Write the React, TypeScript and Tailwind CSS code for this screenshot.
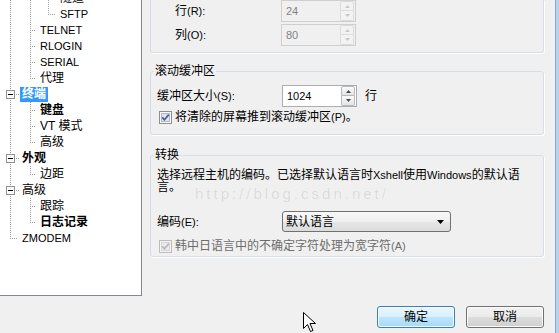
type G = 'v' | 'tee' | 'ell' | 'box';

type Row = { guides: G[]; label: string; latin?: boolean; bold?: boolean; selected?: boolean };

const treeRows: Row[] = [
  { guides: ['v', 'v', 'tee'], label: '隧道' },
  { guides: ['v', 'v', 'ell'], label: 'SFTP', latin: true },
  { guides: ['v', 'tee'], label: 'TELNET', latin: true },
  { guides: ['v', 'tee'], label: 'RLOGIN', latin: true },
  { guides: ['v', 'tee'], label: 'SERIAL', latin: true },
  { guides: ['v', 'ell'], label: '代理' },
  { guides: ['box'], label: '终端', bold: true, selected: true },
  { guides: ['v', 'tee'], label: '键盘', bold: true },
  { guides: ['v', 'tee'], label: 'VT 模式' },
  { guides: ['v', 'ell'], label: '高级' },
  { guides: ['box'], label: '外观', bold: true },
  { guides: ['v', 'ell'], label: '边距' },
  { guides: ['box'], label: '高级' },
  { guides: ['v', 'tee'], label: '跟踪' },
  { guides: ['v', 'ell'], label: '日志记录', bold: true },
  { guides: ['ell'], label: 'ZMODEM', latin: true },
];

const cellWidths = [20, 18, 20];
const dot = { stroke: '#a0a0a0', strokeDasharray: '1 1' };

function Guide({ kind, w }: { kind: G; w: number }) {
  const x = 10.5;
  return (
    <svg width={w} height={16} className="block shrink-0">
      {(kind === 'v' || kind === 'tee') && <line x1={x} y1={0} x2={x} y2={16} {...dot} />}
      {kind === 'ell' && <line x1={x} y1={0} x2={x} y2={9} {...dot} />}
      {(kind === 'tee' || kind === 'ell') && <line x1={10} y1={8.5} x2={w - 2} y2={8.5} {...dot} />}
      {kind === 'box' && (
        <>
          <line x1={x} y1={0} x2={x} y2={4} {...dot} />
          <line x1={x} y1={14} x2={x} y2={16} {...dot} />
          <rect x={6.5} y={4.5} width={8} height={8} fill="#fafafa" stroke="#919191" />
          <line x1={8} y1={8.5} x2={13} y2={8.5} stroke="#000" />
          <line x1={16} y1={8.5} x2={19} y2={8.5} {...dot} />
        </>
      )}
    </svg>
  );
}

function Tree() {
  return (
    <div className="h-[296px] w-[142px] shrink-0 overflow-hidden border-r border-b border-[#828790] bg-white">
      <div className="mt-[-10px] flex flex-col">
        {treeRows.map((r, i) => (
          <div key={i} className="flex h-4 items-center">
            {r.guides.map((g, j) => (
              <Guide key={j} kind={g} w={cellWidths[j]} />
            ))}
            <span
              className={`whitespace-nowrap px-[2px] leading-[15px] ${r.latin ? 'text-[11px]' : 'text-[12px]'} ${
                r.bold ? 'font-bold' : ''
              } ${r.selected ? 'bg-[#3399ff] text-white' : 'text-black'}`}
            >
              {r.label}
            </span>
          </div>
        ))}
      </div>
    </div>
  );
}

function Spin({ value, disabled = false }: { value: string; disabled?: boolean }) {
  const btn = disabled ? 'border-[#dcdcdc] bg-[#f3f3f3]' : 'border-[#b5b9c0] bg-[linear-gradient(#fbfbfb,#e4e4e4)]';
  const arrow = disabled ? '#c8c8c8' : '#4a4a4a';
  return (
    <div
      className={`flex h-[22px] w-[75px] shrink-0 items-center border ${
        disabled ? 'border-[#cfcfcf] bg-[#f0f0f0] text-[#838383]' : 'border-[#abadb3] bg-white text-black'
      }`}
    >
      <span className="flex-1 pl-[4px] text-[11px] leading-none">{value}</span>
      <div className="mr-[1px] flex h-[20px] w-[14px] flex-col">
        <div className={`flex h-[10px] items-center justify-center rounded-t-[2px] border ${btn}`}>
          <svg width="5" height="3" className="block">
            <path d="M2.5 0L5 3H0z" fill={arrow} />
          </svg>
        </div>
        <div className={`flex h-[10px] items-center justify-center rounded-b-[2px] border border-t-0 ${btn}`}>
          <svg width="5" height="3" className="block">
            <path d="M0 0h5L2.5 3z" fill={arrow} />
          </svg>
        </div>
      </div>
    </div>
  );
}

function Check({ disabled = false }: { disabled?: boolean }) {
  return (
    <svg width="13" height="13" className="block shrink-0">
      <rect x="0.5" y="0.5" width="12" height="12" fill={disabled ? '#f4f4f4' : '#f7f7f7'} stroke={disabled ? '#bcbcbc' : '#8e8f8f'} />
      <rect x="2.5" y="2.5" width="8" height="8" fill={disabled ? '#ebebeb' : '#dfe3ee'} stroke={disabled ? '#d6d6d6' : '#b4b9c9'} />
      <path d="M3.2 6.4l2.2 2.4L9.8 3.6" fill="none" stroke={disabled ? '#b9b9b9' : '#4b5f94'} strokeWidth="1.7" />
    </svg>
  );
}

function L({ children }: { children: string }) {
  return <span className="text-[11px]">{children}</span>;
}

export default function App() {
  return (
    <div className="relative flex h-[333px] w-[559px] overflow-hidden bg-[#f0f0f0] font-['Liberation_Sans','Noto_Sans_CJK_SC',sans-serif] text-[12px] text-black">
      <div className="flex w-[555px] flex-col">
        <div className="flex h-[296px] items-start">
          <Tree />

          <div className="ml-[8px] flex w-[394px] flex-col">
            {/* 终端尺寸 */}
            <div className="flex flex-col gap-[2px] rounded-b-[3px] border-x border-b border-[#d5dfe5] pt-0 pb-[6px] pl-[24px] shadow-[1px_1px_0_#fff]">
              <div className="flex h-[22px] items-center">
                <span className="w-[106px] leading-none">
                  行<L>(R):</L>
                </span>
                <Spin value="24" disabled />
              </div>
              <div className="flex h-[22px] items-center">
                <span className="w-[106px] leading-none">
                  列<L>(O):</L>
                </span>
                <Spin value="80" disabled />
              </div>
            </div>

            {/* 滚动缓冲区 */}
            <fieldset className="mt-[10px] rounded-[3px] border border-[#d5dfe5] pb-[10px] pl-[3px] shadow-[1px_1px_0_#fff]">
              <legend className="px-[1px] leading-[16px]">滚动缓冲区</legend>
              <div className="mt-[6px] ml-[3px] flex h-[22px] items-center">
                <span className="w-[125px] leading-none">
                  缓冲区大小<L>(S):</L>
                </span>
                <Spin value="1024" />
                <span className="ml-[8px] leading-none">行</span>
              </div>
              <div className="mt-[3px] ml-[5px] flex h-[14px] items-center gap-[3px]">
                <Check />
                <span className="leading-none">
                  将清除的屏幕推到滚动缓冲区<L>(P)</L>。
                </span>
              </div>
            </fieldset>

            {/* 转换 */}
            <fieldset className="relative mt-[12px] rounded-[3px] border border-[#d5dfe5] pb-[3px] pl-[3px] shadow-[1px_1px_0_#fff]">
              <legend className="px-[1px] leading-[16px]">转换</legend>
              <p className="mt-[6px] ml-[3px] whitespace-nowrap leading-[12px]">
                选择远程主机的编码。已选择默认语言时<L>Xshell</L>使用<L>Windows</L>的默认语
                <br />
                言。
              </p>
              <div className="mt-[18px] ml-[3px] flex h-[21px] items-center">
                <span className="w-[125px] leading-none">
                  编码<L>(E):</L>
                </span>
                <div className="flex h-[21px] w-[169px] items-center rounded-[3px] border border-[#707070] bg-[linear-gradient(#f7f7f7,#efefef_50%,#e6e6e6_50%,#dcdcdc)] pr-[6px] pl-[3px]">
                  <span className="flex-1 leading-none">默认语言</span>
                  <svg width="7" height="4" className="block">
                    <path d="M0 0h7L3.5 4z" fill="#000" />
                  </svg>
                </div>
              </div>
              <div className="mt-[7px] ml-[5px] flex h-[14px] items-center gap-[3px]">
                <Check disabled />
                <span className="leading-none text-[#6d6d6d]">
                  韩中日语言中的不确定字符处理为宽字符<L>(A)</L>
                </span>
              </div>
              <span className="pointer-events-none absolute top-[20px] left-[44px] whitespace-nowrap text-[15px] tracking-[3px] text-black/10">
                http://blog.csdn.net/
              </span>
            </fieldset>
          </div>
        </div>

        <div className="mt-[10px] flex justify-end gap-[11px] pr-[11px]">
          <button className="h-[22px] w-[78px] rounded-[3px] border border-[#3c7fb1] bg-[linear-gradient(#eaf6fd,#d9f0fc_50%,#bee6fd_50%,#a7d9f5)] leading-none shadow-[inset_0_0_0_1px_#f4fbff]">
            确定
          </button>
          <button className="h-[22px] w-[78px] rounded-[3px] border border-[#707070] bg-[linear-gradient(#f2f2f2,#ebebeb_50%,#dddddd_50%,#cfcfcf)] leading-none shadow-[inset_0_0_0_1px_#fcfcfc]">
            取消
          </button>
        </div>
      </div>

      <div className="w-[4px] border-l border-[#8ea9c6] bg-[#b9d1ea]" />

      <svg width="13" height="21" className="absolute top-[312px] left-[303px]">
        <path d="M0.5 0.5V16.5L4.5 12.5L7.5 19.5L10 18.5L7 11.5H12.5Z" fill="#fff" stroke="#000" strokeLinejoin="round" />
      </svg>
    </div>
  );
}
